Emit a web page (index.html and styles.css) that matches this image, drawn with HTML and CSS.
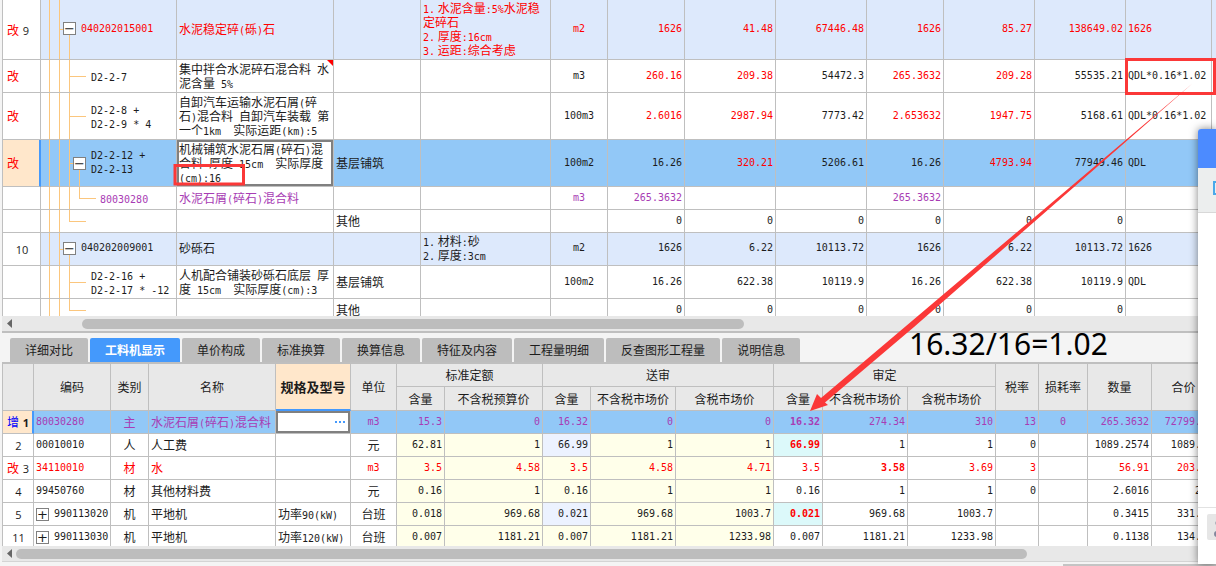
FILE: index.html
```html
<!DOCTYPE html>
<html lang="zh-CN">
<head>
<meta charset="utf-8">
<title>工料机显示</title>
<link rel="stylesheet" href="styles.css">
</head>
<body>
<main class="app">
<section class="pane">
<table class="grid bill">
<colgroup><col class="w38"><col class="w136"><col class="w157"><col class="w87"><col class="w130"><col class="w57"><col class="w77"><col class="w91"><col class="w91"><col class="w77"><col class="w91"><col class="w91"><col class="w86"><col class="w40"></colgroup>
<tbody>
<tr class="h4 item red"><th class="mark">改 <span class="num">9</span></th>
<td class="tree l1"><svg class="guides"><line x1="8.5" x2="8.5" y2="100%"/><line x1="18.5" x2="18.5" y2="100%"/><line x1="28.5" x2="28.5" y1="50%" y2="100%"/><line x1="18" x2="23" y1="50%" y2="50%"/></svg><div class="node"><button class="toggle" aria-label="折叠">−</button><span class="n">040202015001</span></div></td>
<td>水泥稳定碎<span class="n">(</span>砾<span class="n">)</span>石</td><td></td>
<td><span class="n">1.</span> 水泥含量<span class="n">:5%</span>水泥稳<br>定碎石<br><span class="n">2.</span> 厚度<span class="n">:16cm</span><br><span class="n">3.</span> 运距<span class="n">:</span>综合考虑</td>
<td class="c">m2</td><td class="r">1626</td><td class="r">41.48</td><td class="r">67446.48</td><td class="r">1626</td><td class="r">85.27</td><td class="r">138649.02</td><td class="m">1626</td><td></td></tr>
<tr class="h2"><th class="mark red">改</th>
<td class="tree l2"><svg class="guides"><line x1="8.5" x2="8.5" y2="100%"/><line x1="18.5" x2="18.5" y2="100%"/><line x1="28.5" x2="28.5" y2="100%"/><line x1="28" x2="45" y1="50%" y2="50%"/></svg><span class="n">D2-2-7</span></td>
<td class="noted">集中拌合水泥碎石混合料<span class="n"> </span>水<br>泥含量<span class="n"> 5%</span></td><td></td><td></td>
<td class="c">m3</td><td class="r red">260.16</td><td class="r red">209.38</td><td class="r">54472.3</td><td class="r red">265.3632</td><td class="r red">209.28</td><td class="r">55535.21</td><td class="m">QDL*0.16*1.02</td><td></td></tr>
<tr class="h3"><th class="mark red">改</th>
<td class="tree l2"><svg class="guides"><line x1="8.5" x2="8.5" y2="100%"/><line x1="18.5" x2="18.5" y2="100%"/><line x1="28.5" x2="28.5" y2="100%"/><line x1="28" x2="45" y1="50%" y2="50%"/></svg><span class="n">D2-2-8 +<br>D2-2-9 * 4</span></td>
<td>自卸汽车运输水泥石屑<span class="n">(</span>碎<br>石<span class="n">)</span>混合料<span class="n"> </span>自卸汽车装载<span class="n"> </span>第<br>一个<span class="n">1km  </span>实际运距<span class="n">(km):5</span></td><td></td><td></td>
<td class="c">100m3</td><td class="r red">2.6016</td><td class="r red">2987.94</td><td class="r">7773.42</td><td class="r red">2.653632</td><td class="r red">1947.75</td><td class="r">5168.61</td><td class="m">QDL*0.16*1.02</td><td></td></tr>
<tr class="h3 selected"><th class="mark red current">改</th>
<td class="tree l3"><svg class="guides"><line x1="8.5" x2="8.5" y2="100%"/><line x1="18.5" x2="18.5" y2="100%"/><line x1="28.5" x2="28.5" y2="100%"/><line x1="38.5" x2="38.5" y1="50%" y2="100%"/><line x1="28" x2="33" y1="50%" y2="50%"/></svg><div class="node"><button class="toggle" aria-label="折叠">−</button><span class="n">D2-2-12 +<br>D2-2-13</span></div></td>
<td class="active">机械铺筑水泥石屑<span class="n">(</span>碎石<span class="n">)</span>混<br>合料<span class="n"> </span>厚度<span class="n"> 15cm  </span>实际厚度<br><span class="n">(cm):16</span></td><td>基层铺筑</td><td></td>
<td class="c">100m2</td><td class="r">16.26</td><td class="r red">320.21</td><td class="r">5206.61</td><td class="r">16.26</td><td class="r red">4793.94</td><td class="r">77949.46</td><td class="m">QDL</td><td></td></tr>
<tr class="h1 purple"><th class="mark"></th>
<td class="tree l4"><svg class="guides"><line x1="8.5" x2="8.5" y2="100%"/><line x1="18.5" x2="18.5" y2="100%"/><line x1="28.5" x2="28.5" y2="100%"/><line x1="38.5" x2="38.5" y2="50%"/><line x1="38" x2="55" y1="50%" y2="50%"/></svg><span class="n">80030280</span></td>
<td>水泥石屑<span class="n">(</span>碎石<span class="n">)</span>混合料</td><td></td><td></td>
<td class="c">m3</td><td class="r">265.3632</td><td></td><td></td><td class="r">265.3632</td><td></td><td></td><td></td><td></td></tr>
<tr class="h1"><th class="mark"></th>
<td class="tree"><svg class="guides"><line x1="8.5" x2="8.5" y2="100%"/><line x1="18.5" x2="18.5" y2="100%"/><line x1="28.5" x2="28.5" y2="50%"/><line x1="28" x2="45" y1="50%" y2="50%"/></svg></td>
<td></td><td>其他</td><td></td><td></td><td class="r">0</td><td class="r">0</td><td class="r">0</td><td class="r">0</td><td class="r">0</td><td class="r">0</td><td></td><td></td></tr>
<tr class="h2 item"><th class="mark mid"><span class="num">10</span></th>
<td class="tree l1"><svg class="guides"><line x1="8.5" x2="8.5" y2="100%"/><line x1="18.5" x2="18.5" y2="100%"/><line x1="28.5" x2="28.5" y1="50%" y2="100%"/><line x1="18" x2="23" y1="50%" y2="50%"/></svg><div class="node"><button class="toggle" aria-label="折叠">−</button><span class="n">040202009001</span></div></td>
<td>砂砾石</td><td></td>
<td><span class="n">1.</span> 材料<span class="n">:</span>砂<br><span class="n">2.</span> 厚度<span class="n">:3cm</span></td>
<td class="c">m2</td><td class="r">1626</td><td class="r">6.22</td><td class="r">10113.72</td><td class="r">1626</td><td class="r">6.22</td><td class="r">10113.72</td><td class="m">1626</td><td></td></tr>
<tr class="h2"><th class="mark"></th>
<td class="tree l2"><svg class="guides"><line x1="8.5" x2="8.5" y2="100%"/><line x1="18.5" x2="18.5" y2="100%"/><line x1="28.5" x2="28.5" y2="100%"/><line x1="28" x2="45" y1="50%" y2="50%"/></svg><span class="n">D2-2-16 +<br>D2-2-17 * -12</span></td>
<td>人机配合铺装砂砾石底层<span class="n"> </span>厚<br>度<span class="n"> 15cm  </span>实际厚度<span class="n">(cm):3</span></td><td>基层铺筑</td><td></td>
<td class="c">100m2</td><td class="r">16.26</td><td class="r">622.38</td><td class="r">10119.9</td><td class="r">16.26</td><td class="r">622.38</td><td class="r">10119.9</td><td class="m">QDL</td><td></td></tr>
<tr class="h1"><th class="mark"></th>
<td class="tree"><svg class="guides"><line x1="8.5" x2="8.5" y2="100%"/><line x1="18.5" x2="18.5" y2="100%"/><line x1="28.5" x2="28.5" y2="50%"/><line x1="28" x2="45" y1="50%" y2="50%"/></svg></td>
<td></td><td>其他</td><td></td><td></td><td class="r">0</td><td class="r">0</td><td class="r">0</td><td class="r">0</td><td class="r">0</td><td class="r">0</td><td></td><td></td></tr>
</tbody>
</table>
</section>
<div class="scrollbar first"><svg class="caret" viewBox="0 0 5 9"><path d="M5 0v9L0 4.500z"/></svg><div class="track"><div class="thumb"></div></div></div>
<nav class="tabs">
<button>详细对比</button><button class="on">工料机显示</button><button>单价构成</button><button>标准换算</button><button>换算信息</button><button>特征及内容</button><button>工程量明细</button><button>反查图形工程量</button><button>说明信息</button>
</nav>
<section class="pane detail">
<table class="grid">
<colgroup><col class="w31"><col class="w77"><col class="w38"><col class="w127"><col class="w75"><col class="w46"><col class="w48"><col class="w98"><col class="w48"><col class="w85"><col class="w98"><col class="w49"><col class="w85"><col class="w88"><col class="w43"><col class="w49"><col class="w64"><col class="w64"></colgroup>
<thead>
<tr class="h1"><th rowspan="2"></th><th rowspan="2">编码</th><th rowspan="2">类别</th><th rowspan="2">名称</th><th rowspan="2" class="chosen">规格及型号</th><th rowspan="2">单位</th><th colspan="2">标准定额</th><th colspan="3">送审</th><th colspan="3">审定</th><th rowspan="2">税率</th><th rowspan="2">损耗率</th><th rowspan="2">数量</th><th rowspan="2">合价</th></tr>
<tr class="h1b"><th>含量</th><th>不含税预算价</th><th>含量</th><th>不含税市场价</th><th>含税市场价</th><th>含量</th><th>不含税市场价</th><th>含税市场价</th></tr>
</thead>
<tbody>
<tr class="h1 selected purple"><th class="mark current"><span class="blue">增</span> <b class="num">1</b></th><td class="m">80030280</td><td class="k">主</td><td>水泥石屑<span class="n">(</span>碎石<span class="n">)</span>混合料</td><td class="active more"><button class="dots" aria-label="更多"><i></i><i></i><i></i></button></td><td class="c">m3</td><td class="r">15.3</td><td class="r">0</td><td class="r">16.32</td><td class="r">0</td><td class="r">0</td><td class="r strong">16.32</td><td class="r">274.34</td><td class="r">310</td><td class="r">13</td><td class="c">0</td><td class="r">265.3632</td><td class="r">72799.88</td></tr>
<tr class="h1"><th class="mark mid"><span class="num">2</span></th><td class="m">00010010</td><td class="k">人</td><td>人工费</td><td></td><td class="k">元</td><td class="r cream">62.81</td><td class="r cream">1</td><td class="r pale">66.99</td><td class="r cream">1</td><td class="r cream">1</td><td class="r strong red aqua">66.99</td><td class="r">1</td><td class="r">1</td><td class="r">0</td><td></td><td class="r">1089.2574</td><td class="r">1089.26</td></tr>
<tr class="h1 red"><th class="mark">改 <span class="num">3</span></th><td class="m">34110010</td><td class="k">材</td><td>水</td><td></td><td class="c">m3</td><td class="r cream">3.5</td><td class="r cream">4.58</td><td class="r cream">3.5</td><td class="r cream">4.58</td><td class="r cream">4.71</td><td class="r">3.5</td><td class="r strong">3.58</td><td class="r">3.69</td><td class="r">3</td><td></td><td class="r">56.91</td><td class="r">203.74</td></tr>
<tr class="h1"><th class="mark mid"><span class="num">4</span></th><td class="m">99450760</td><td class="k">材</td><td>其他材料费</td><td></td><td class="k">元</td><td class="r cream">0.16</td><td class="r cream">1</td><td class="r cream">0.16</td><td class="r cream">1</td><td class="r cream">1</td><td class="r">0.16</td><td class="r">1</td><td class="r">1</td><td class="r">0</td><td></td><td class="r">2.6016</td><td class="r">2.6</td></tr>
<tr class="h1"><th class="mark mid"><span class="num">5</span></th><td><div class="node"><button class="toggle" aria-label="展开">+</button><span class="n">990113020</span></div></td><td class="k">机</td><td>平地机</td><td>功率<span class="n">90(kW)</span></td><td class="k">台班</td><td class="r cream">0.018</td><td class="r cream">969.68</td><td class="r pale">0.021</td><td class="r cream">969.68</td><td class="r cream">1003.7</td><td class="r strong red aqua">0.021</td><td class="r">969.68</td><td class="r">1003.7</td><td></td><td></td><td class="r">0.3415</td><td class="r">331.15</td></tr>
<tr class="h1"><th class="mark mid"><span class="num">11</span></th><td><div class="node"><button class="toggle" aria-label="展开">+</button><span class="n">990113030</span></div></td><td class="k">机</td><td>平地机</td><td>功率<span class="n">120(kW)</span></td><td class="k">台班</td><td class="r cream">0.007</td><td class="r cream">1181.21</td><td class="r cream">0.007</td><td class="r cream">1181.21</td><td class="r cream">1233.98</td><td class="r">0.007</td><td class="r">1181.21</td><td class="r">1233.98</td><td></td><td></td><td class="r">0.1138</td><td class="r">134.42</td></tr>
</tbody>
</table>
</section>
<div class="scrollbar second"><svg class="caret" viewBox="0 0 5 9"><path d="M5 0v9L0 4.500z"/></svg><div class="track"><div class="thumb"></div></div></div>
<footer class="status"><div class="field"></div></footer>
</main>
<aside class="popup">
<div class="popup-title"></div>
<div class="popup-tools"><svg width="10" height="16" viewBox="0 0 10 16"><path d="M10 1H1v12h9" fill="none" stroke="#4aa8ea" stroke-width="2"/></svg></div>
<div class="popup-body"></div>
<div class="popup-foot"><div class="chip"><svg width="12" height="26" viewBox="0 0 12 26"><circle cx="10" cy="9" r="2" fill="#aeb0bb"/><circle cx="10" cy="20" r="3" fill="#82869c"/></svg></div></div>
</aside>
<svg class="markup" width="1216" height="566" viewBox="0 0 1216 566">
<g fill="none" stroke="#fb3838" stroke-width="3"><path d="M1126.500 59.500h88v34h-88z"/><path d="M175 165.500h68.500v18.500H175z"/></g>
<path fill="#fb3838" d="M1193 83L821 398 817 394 810 411 828 405 825 402.500 914 327z"/>
</svg>
<p class="note">16.32/16=1.02</p>
</body>
</html>
```

FILE: styles.css
```css
* { box-sizing: border-box; }
body {
  margin: 0;
  overflow: hidden;
  background: #f4f4f4;
  color: #1c1c1c;
  font: 12px/14px "Noto Sans CJK SC", sans-serif;
}
button { font: inherit; color: inherit; padding: 0; border: 0; cursor: pointer; }
.app { height: 100vh; display: flex; flex-direction: column; padding-left: 2px; }
.pane { flex: 1 1 0; min-height: 0; overflow: hidden; border-left: 1px solid #bfbfbf; background: #fff; }
.detail { flex: 0 0 183px; border-top: 1px solid #bfbfbf; }

/* grids */
.grid { table-layout: fixed; width: 0; border-collapse: separate; border-spacing: 0; }
.grid td, .grid th {
  position: relative;
  padding: 0 2px;
  border-right: 1px solid #bfbfbf;
  border-bottom: 1px solid #bfbfbf;
  vertical-align: middle;
  text-align: left;
  white-space: pre;
  font-weight: 400;
}
.h1 { height: 23px; }
.h1b { height: 24px; }
.h2 { height: 33px; }
.h3 { height: 47px; }
.h4 { height: 60px; }
.w31 { width: 31px; } .w38 { width: 38px; } .w40 { width: 40px; } .w43 { width: 43px; }
.w46 { width: 46px; } .w48 { width: 48px; } .w49 { width: 49px; } .w57 { width: 57px; }
.w64 { width: 64px; } .w75 { width: 75px; } .w77 { width: 77px; } .w85 { width: 85px; }
.w86 { width: 86px; } .w87 { width: 87px; } .w88 { width: 88px; } .w91 { width: 91px; }
.w98 { width: 98px; } .w127 { width: 127px; } .w130 { width: 130px; } .w136 { width: 136px; }
.w157 { width: 157px; }
.n, .grid .c, .grid .r, .grid .m { font-family: "DejaVu Sans Mono", monospace; font-size: 10px; }
.n { line-height: 10px; }
.grid .r { text-align: right; }
.grid .c, .grid .k { text-align: center; }
.grid .strong { font-weight: 700; }
.red { color: #f00; }
.purple { color: #a83cb4; }
.blue { color: #00f; }
.item td { background: #dde9fc; }
.bill .item td { padding-bottom: 2px; }
.grid .selected td { background: #92c8f7; }
.grid .selected .active { background: #fff; box-shadow: inset 0 0 0 2px #808080; }
.cream { background: #ffffea; }
.pale { background: #ecf2ff; }
.aqua { background: #dcf9fa; }
.grid .mark { padding-left: 4px; background: #fff; }
.grid .mid { padding-left: 2px; text-align: center; }
.grid .current { background: #ffe7cb; border-right: 2px solid #4499fc; }
.num { font-family: "Open Sans", sans-serif; font-size: 11px; line-height: 10px; color: #1c1c1c; }
.mark .num { margin-left: 1px; }
.noted::after {
  content: "";
  position: absolute;
  top: 0;
  right: 0;
  border-top: 6px solid #f00;
  border-left: 6px solid transparent;
}
.grid thead th { background: #e8e8e8; text-align: center; }
.grid thead .chosen { background: #ffe7cb; font-size: 13px; font-weight: 700; border-bottom: 2px solid #4499fc; }

/* tree column */
.guides { position: absolute; left: 0; top: 0; width: 100%; height: 100%; }
.guides line { stroke: #fbc67d; shape-rendering: crispEdges; }
.grid .l1 { padding-left: 22px; }
.grid .l2 { padding-left: 50px; }
.grid .l3 { padding-left: 32px; }
.grid .l4 { padding-left: 59px; }
.node { position: relative; display: flex; align-items: center; gap: 5px; }
.node .n { line-height: 14px; }
.toggle {
  flex: none;
  width: 13px;
  height: 13px;
  border: 1px solid #808080;
  background: #fff;
  color: #1c1c1c;
  font: 13px/11px "DejaVu Sans", sans-serif;
}
.dots { display: flex; gap: 2px; margin-left: auto; margin-right: 3px; background: none; }
.dots i { width: 2px; height: 2px; background: #4499fc; }

/* scroll bars */
.scrollbar { flex: none; display: flex; align-items: center; height: 15px; padding-left: 5px; background: #e8e8e8; }
.first { height: 17px; border-bottom: 2px solid #bfbfbf; }
.second { height: 16px; border-bottom: 1px solid #d4d4d4; }
.caret { width: 5px; height: 9px; fill: #666; }
.track { flex: 1; display: flex; }
.thumb { height: 10px; border-radius: 5px; background: #bdbdbd; }
.first .thumb { width: 55%; margin-left: 70px; }
.second .thumb { width: 84%; margin-left: 4px; }

/* tabs */
.tabs { flex: none; display: flex; align-items: flex-end; gap: 2px; height: 30px; padding: 0 8px; border-bottom: 1px solid #bfbfbf; }
.tabs button { height: 24px; padding: 0 15px; border-radius: 2px 2px 0 0; background: #bdbdbd; white-space: nowrap; }
.tabs .on { background: #4499fc; color: #fff; font-weight: 700; }
.status { flex: none; height: 4px; }
.field { height: 2px; margin: 2px 0 0 1061px; border: 1px solid #c4c4c4; background: #fff; }

/* floating window */
.popup {
  position: absolute;
  top: 129px;
  right: 0;
  bottom: 2px;
  width: 18px;
  display: flex;
  flex-direction: column;
  border-top-left-radius: 3px;
  background: #fff;
  box-shadow: 0 0 8px rgba(0, 0, 0, .5);
}
.popup-title { height: 39px; border-top-left-radius: 3px; background: #4c8bff; }
.popup-tools { height: 45px; padding: 13px 0 0 15px; border-bottom: 1px solid #d8d8d8; background: #eceeee; overflow: hidden; }
.popup-body { flex: 1; }
.popup-foot { height: 57px; padding: 6px 0 0 9px; border-top: 1px solid #e2e2e2; overflow: hidden; }
.chip { width: 12px; height: 26px; border-radius: 2px 0 0 2px; background: #e6e6e6; }

/* annotations */
.markup { position: absolute; top: 0; left: 0; pointer-events: none; }
.note {
  position: absolute;
  left: 909px;
  top: 324px;
  margin: 0;
  color: #000;
  font: 30px/40px "Noto Sans", sans-serif;
  white-space: nowrap;
}
```
